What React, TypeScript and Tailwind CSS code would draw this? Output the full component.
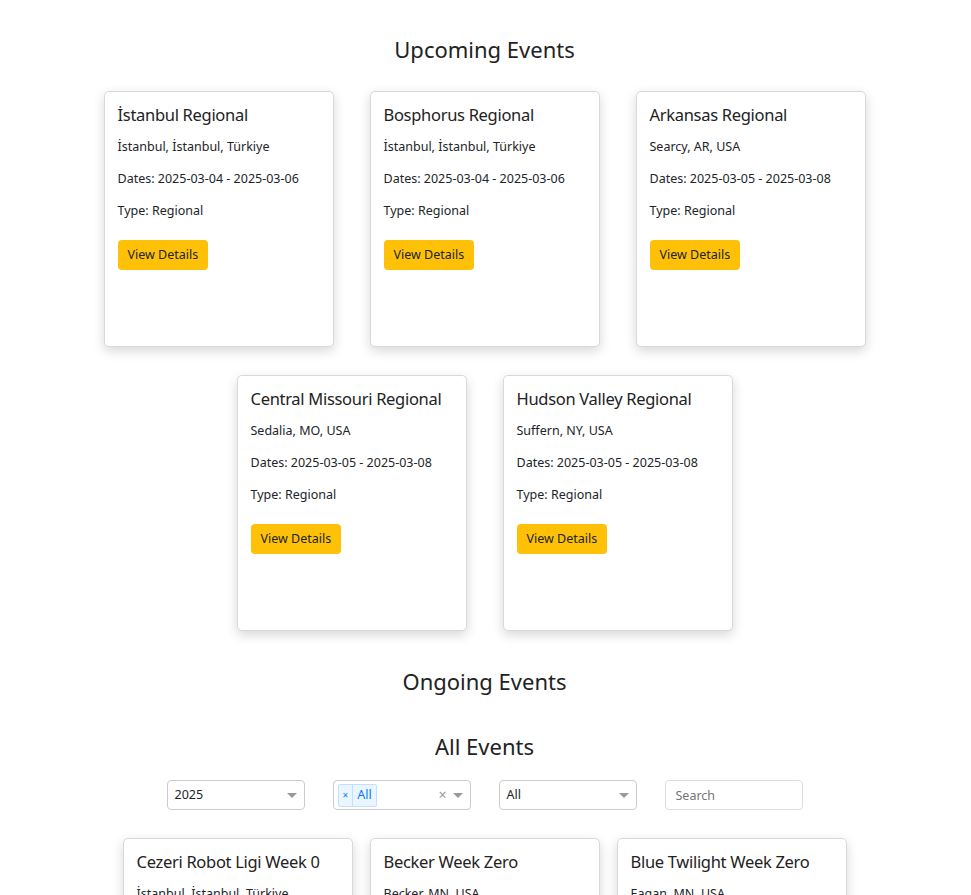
import React from "react";

type Ev = { name: string; loc: string; start: string; end: string; type: string };

const upcoming: Ev[] = [
  { name: "İstanbul Regional", loc: "İstanbul, İstanbul, Türkiye", start: "2025-03-04", end: "2025-03-06", type: "Regional" },
  { name: "Bosphorus Regional", loc: "İstanbul, İstanbul, Türkiye", start: "2025-03-04", end: "2025-03-06", type: "Regional" },
  { name: "Arkansas Regional", loc: "Searcy, AR, USA", start: "2025-03-05", end: "2025-03-08", type: "Regional" },
  { name: "Central Missouri Regional", loc: "Sedalia, MO, USA", start: "2025-03-05", end: "2025-03-08", type: "Regional" },
  { name: "Hudson Valley Regional", loc: "Suffern, NY, USA", start: "2025-03-05", end: "2025-03-08", type: "Regional" },
];

const all: Ev[] = [
  { name: "Cezeri Robot Ligi Week 0", loc: "İstanbul, İstanbul, Türkiye", start: "2025-02-15", end: "2025-02-16", type: "Preseason" },
  { name: "Becker Week Zero", loc: "Becker, MN, USA", start: "2025-02-15", end: "2025-02-15", type: "Preseason" },
  { name: "Blue Twilight Week Zero", loc: "Eagan, MN, USA", start: "2025-02-15", end: "2025-02-15", type: "Preseason" },
];

function Card({ ev }: { ev: Ev }) {
  return (
    <div className="w-[230px] h-[256px] bg-white border border-[#d9d9d9] rounded-[5px] shadow-[0_4px_12px_rgba(0,0,0,0.16)] px-[13px] pt-[13px] text-[#212529]">
      <div className="text-[16.5px] tracking-[-0.3px] leading-[20px] text-[#222] whitespace-nowrap">{ev.name}</div>
      <div className="text-[12.5px] leading-[20px] mt-[12px]">{ev.loc}</div>
      <div className="text-[12.5px] leading-[20px] mt-[12px]">Dates: {ev.start} - {ev.end}</div>
      <div className="text-[12.5px] leading-[20px] mt-[12px]">Type: {ev.type}</div>
      <button className="mt-[19px] h-[30px] px-[10px] rounded-[4px] bg-[#ffc107] text-[12.5px] text-[#212529]">
        View Details
      </button>
    </div>
  );
}

function Caret() {
  return <span className="w-0 h-0 border-l-[5px] border-r-[5px] border-t-[5px] border-l-transparent border-r-transparent border-t-[#999]" />;
}

export default function App() {
  return (
    <div className="min-h-screen bg-white font-['Noto_Sans',sans-serif] text-[#212529] pr-[2px]">
      <h2 className="pt-[34px] text-center text-[22px] leading-[30px] text-[#222]">Upcoming Events</h2>
      <div className="mt-[27px] flex flex-wrap justify-center gap-x-[36px] gap-y-[28px] w-[770px] mx-auto">
        {upcoming.map((e) => (
          <Card key={e.name} ev={e} />
        ))}
      </div>
      <h2 className="mt-[35px] text-center text-[22px] leading-[30px] text-[#222]">Ongoing Events</h2>
      <h2 className="mt-[35px] text-center text-[22px] leading-[30px] text-[#222]">All Events</h2>
      <div className="mt-[19px] flex justify-center gap-[28px] text-[12.5px]">
        <div className="w-[138px] h-[30px] border border-[#ccc] rounded-[4px] flex items-center justify-between pl-[7px] pr-[7px]">
          <span>2025</span>
          <Caret />
        </div>
        <div className="w-[138px] h-[30px] border border-[#ccc] rounded-[4px] flex items-center pl-[4px] pr-[7px]">
          <span className="flex items-stretch h-[23px] border border-[#c2e0ff] bg-[#ebf5ff] rounded-[2px] text-[#007eff]">
            <span className="px-[4px] flex items-center text-[10px] border-r border-[#c2e0ff]">×</span>
            <span className="px-[4px] flex items-center">All</span>
          </span>
          <span className="ml-auto text-[#999] text-[14px] leading-none mr-[6px]">×</span>
          <Caret />
        </div>
        <div className="w-[138px] h-[30px] border border-[#ccc] rounded-[4px] flex items-center justify-between pl-[7px] pr-[7px]">
          <span>All</span>
          <Caret />
        </div>
        <input
          placeholder="Search"
          className="w-[138px] h-[30px] border border-[#ddd] rounded-[4px] px-[10px] text-[12.5px] placeholder:text-[#757575] outline-none"
        />
      </div>
      <div className="mt-[28px] flex justify-center gap-[17px] pb-[40px]">
        {all.map((e) => (
          <Card key={e.name} ev={e} />
        ))}
      </div>
    </div>
  );
}
